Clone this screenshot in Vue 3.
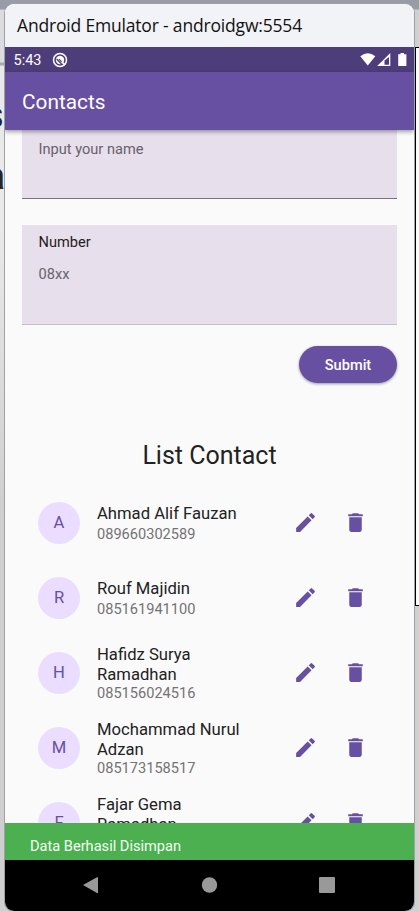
<script setup>
const contacts = [
  { name: ['Ahmad Alif Fauzan'], number: '089660302589' },
  { name: ['Rouf Majidin'], number: '085161941100' },
  { name: ['Hafidz Surya', 'Ramadhan'], number: '085156024516' },
  { name: ['Mochammad Nurul', 'Adzan'], number: '085173158517' },
  { name: ['Fajar Gema', 'Ramadhan'], number: '' },
]
</script>

<template>
  <div class="desktop">
    <div class="behind-left">
      <span class="glyph glyph-s">s</span>
      <span class="glyph glyph-a">a</span>
    </div>
    <div class="behind-right"></div>
    <main class="window">
      <header class="titlebar"><span>Android Emulator - androidgw:5554</span></header>
      <div class="status">
        <span class="clock">5:43</span>
        <svg class="sync" viewBox="0 0 16 16">
          <circle cx="8" cy="8" r="6.5" fill="none" stroke="#fff" stroke-width="1.5" />
          <circle cx="8" cy="8" r="4.2" fill="#fff" />
          <path d="M4.6 7L9.6 12" stroke="#4d3d7a" stroke-width="1.3" />
          <path d="M7 7.2L9.6 9.8" stroke="#4d3d7a" stroke-width="1.2" />
          <path d="M10.5 10.5L13 13" stroke="#fff" stroke-width="1.6" />
        </svg>
        <svg class="signals" viewBox="0 0 48 16">
          <path d="M0.3 4.2Q7.8 -1.6 15.3 4.2L7.8 13.5Z" fill="#fff" />
          <path d="M30.3 1V14H17.2Z" fill="#fff" />
          <path d="M29 5V12.7H24.5V8.5Z" fill="#4d3d7a" />
          <path d="M38.2 2.2H40.5V1H44V2.2H46.4V14H38.2Z" fill="#fff" />
        </svg>
      </div>
      <div class="appbar"><span>Contacts</span></div>
      <section class="content">
        <div class="field field-name"><span class="hint">Input your name</span></div>
        <div class="field field-number">
          <span class="label">Number</span>
          <span class="hint">08xx</span>
        </div>
        <button class="submit"><span>Submit</span></button>
        <h1 class="heading"><span>List Contact</span></h1>
        <ul class="list">
          <li v-for="c in contacts" :key="c.name[0]" class="row">
            <span class="avatar">{{ c.name[0][0] }}</span>
            <div class="info" :class="{ single: c.name.length === 1 }">
              <span v-for="part in c.name" :key="part" class="name">{{ part }}</span>
              <span class="phone">{{ c.number }}</span>
            </div>
            <svg class="icon" viewBox="0 0 24 24">
              <path d="M3 17.25V21h3.75L17.81 9.94l-3.75-3.75L3 17.25zM20.71 7.04a1 1 0 0 0 0-1.41l-2.34-2.34a1 1 0 0 0-1.41 0l-1.83 1.83 3.75 3.75 1.83-1.83z" />
            </svg>
            <svg class="icon" viewBox="0 0 24 24">
              <path d="M6 19c0 1.1.9 2 2 2h8c1.1 0 2-.9 2-2V7H6v12zM19 4h-3.5l-1-1h-5l-1 1H5v2h14V4z" />
            </svg>
          </li>
        </ul>
      </section>
      <div class="snackbar"><span>Data Berhasil Disimpan</span></div>
      <nav class="navbar">
        <svg viewBox="0 0 409 51">
          <path d="M78 25L92 17.2Q93 16.7 93 17.8V32.4Q93 33.5 92 33Z" />
          <circle cx="204.5" cy="25" r="7.7" />
          <rect x="314" y="17" width="16" height="16" rx="1" />
        </svg>
      </nav>
    </main>
  </div>
</template>

<style>
body { margin: 0; overflow: hidden; }
</style>

<style scoped>
.desktop {
  position: relative;
  box-sizing: border-box;
  width: 419px;
  height: 911px;
  padding: 4px 5px 0;
  overflow: hidden;
  background: linear-gradient(#999ba7 0 9px, #d0d0d2 10px 100%);
  font-family: Roboto, sans-serif;
}
.behind-left {
  position: absolute;
  left: 0;
  top: 10px;
  width: 5px;
  height: 901px;
  overflow: hidden;
  background: linear-gradient(#dcdcdf 0 52px, #a9a9ad 53px 55px, #e9e9e9 56px 220px, #cfcfcf 500px);
}
.glyph {
  position: absolute;
  right: 0;
  font-size: 39px;
  line-height: 40px;
  color: #252525;
}
.glyph-s { top: 85px; right: 1px; }
.glyph-a { top: 146px; font-weight: 500; }
.behind-right {
  position: absolute;
  right: 0;
  top: 47px;
  width: 3px;
  height: 557px;
  border: solid #000;
  border-width: 1px 0 1px 1px;
  background: #fafafa;
}
.window {
  position: relative;
  width: 409px;
  height: 907px;
  display: flex;
  flex-direction: column;
  border-radius: 9px;
  overflow: hidden;
  box-shadow: 0 0 0 1px #9fa0a6;
  background: #fafafa;
}
.window > * { flex: none; box-sizing: border-box; }
.titlebar {
  height: 43px;
  padding-left: 12px;
  background: #f1f3f7;
  font: 17.5px/42px "Open Sans", sans-serif;
  letter-spacing: -0.18px;
  color: #111;
  white-space: nowrap;
}
.status {
  height: 25px;
  padding: 0 6.5px 0 8.5px;
  display: flex;
  align-items: center;
  background: #4d3d7a;
}
.clock { font-size: 14.5px; line-height: 17px; padding-top: 1px; color: #fff; width: 38.5px; }
.sync { width: 16px; height: 16px; }
.signals { width: 48px; height: 16px; margin-left: auto; }
.appbar {
  position: relative;
  z-index: 1;
  height: 58px;
  padding-left: 17px;
  background: #6750a2;
  box-shadow: 0 2px 4px rgba(0, 0, 0, .35);
  color: #fff;
  font-size: 20.8px;
  line-height: 60px;
}
.content {
  height: 693px;
  padding: 0 17px;
  display: flex;
  flex-direction: column;
  overflow: hidden;
}
.content > * { flex: none; box-sizing: border-box; }
.field {
  padding: 0 16.5px;
  display: flex;
  flex-direction: column;
  background: #e7dfec;
  font-size: 14.6px;
  line-height: 20px;
}
.field-name { height: 69px; padding-top: 9px; border-bottom: 1px solid #77727c; }
.field-number { height: 100px; margin-top: 26px; padding-top: 7px; gap: 12px; border-bottom: 1px solid #c4bfc8; }
.hint { color: #67626b; }
.label { color: #1f1c22; }
.submit {
  align-self: flex-end;
  width: 98px;
  height: 37px;
  margin-top: 21px;
  padding: 0;
  border: 0;
  border-radius: 19px;
  background: #6750a2;
  box-shadow: 0 1px 3px rgba(0, 0, 0, .4);
  color: #fff;
  font: 500 14.6px/38px Roboto, sans-serif;
}
.heading {
  height: 32px;
  margin: 57px 0 13px;
  text-align: center;
  font-size: 25px;
  font-weight: 400;
  line-height: 32px;
  color: #222;
}
.list { margin: 0; padding: 0 16px; list-style: none; }
.row { height: 75px; display: flex; align-items: center; }
.avatar {
  width: 42px;
  height: 42px;
  margin-right: 17px;
  border-radius: 50%;
  background: #eaddff;
  color: #6750a2;
  font-size: 16.6px;
  line-height: 42px;
  text-align: center;
}
.info { width: 196.2px; padding-top: 2px; display: flex; flex-direction: column; white-space: nowrap; }
.name { font-size: 16.65px; line-height: 20px; color: #222; }
.phone { height: 17px; font-size: 14.6px; line-height: 16px; color: #737373; }
.single .phone { margin-top: 2px; }
.icon { width: 25px; height: 25px; margin-right: 25px; fill: #6750a2; }
.icon:last-child { margin-right: 0; }
.snackbar {
  height: 37px;
  padding-left: 25px;
  background: #4caf50;
  color: #f4fff4;
  font-size: 14.6px;
  line-height: 46px;
}
.navbar { height: 51px; background: #000; }
.navbar svg { display: block; width: 409px; height: 51px; fill: #999; }
</style>
